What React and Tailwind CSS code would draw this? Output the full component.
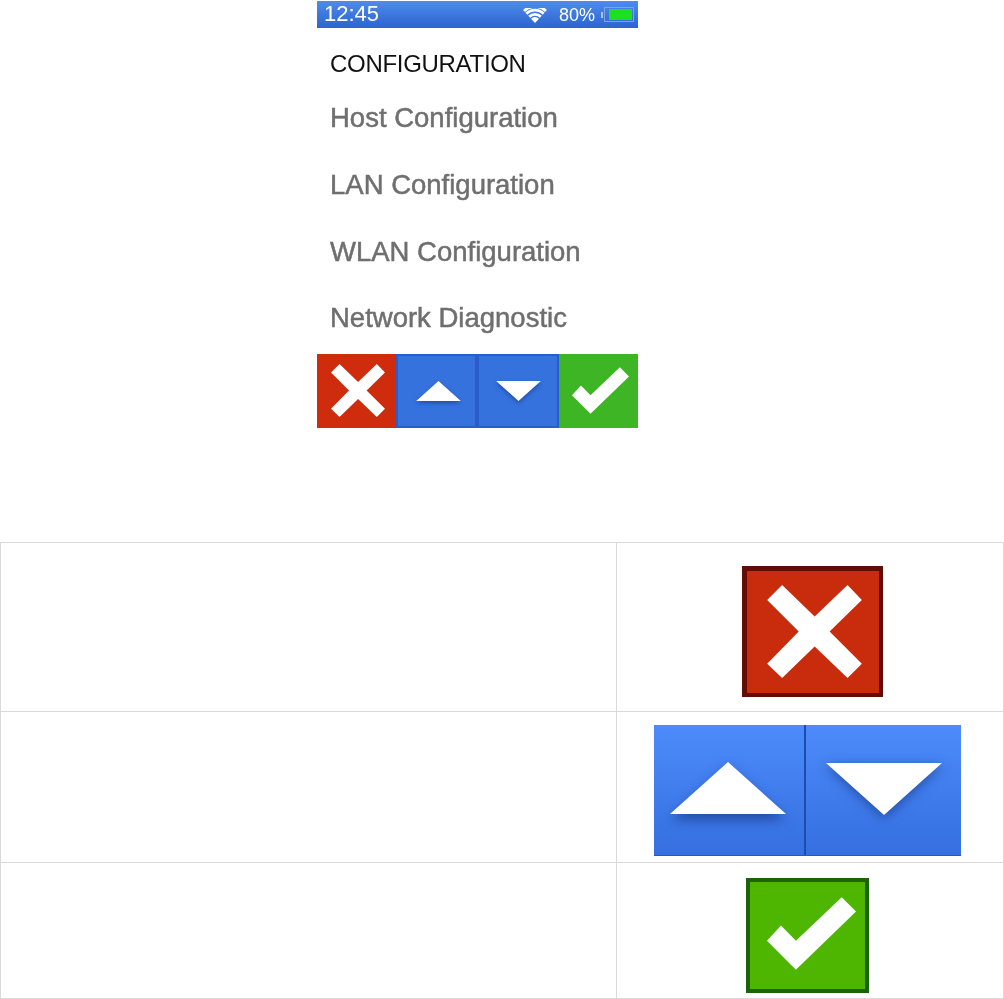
const X = ({ className }) => (
  <svg viewBox="500 150 285 280" className={className}>
    <polygon fill="#fff" points="545,150 643,245 742,150 785,195 688,290 785,387 742,430 643,335 545,430 500,387 595,290 500,195" />
  </svg>
);
const Check = ({ className }) => (
  <svg viewBox="500 112 268 218" className={className}>
    <polygon fill="#fff" points="725,112 768,155 587,330 500,243 542,197 587,243" />
  </svg>
);
const Up = ({ className }) => (
  <svg viewBox="0 0 116 52" className={className}>
    <polygon fill="#fff" points="58,0 116,52 0,52" />
  </svg>
);
const Down = ({ className }) => (
  <svg viewBox="0 0 116 52" className={className}>
    <polygon fill="#fff" points="0,0 116,0 58,52" />
  </svg>
);
const Wifi = () => (
  <svg viewBox="0 0 24 15" className="w-6 h-[15px]">
    <path d="M12 15 L8 10.8 A5.6 5.6 0 0 1 16 10.8 Z" fill="#fff" />
    <path d="M6.2 8.8 A8.2 8.2 0 0 1 17.8 8.8" fill="none" stroke="#fff" strokeWidth="2.8" />
    <path d="M3.4 5.8 A12 12 0 0 1 20.6 5.8" fill="none" stroke="#fff" strokeWidth="2.8" />
    <path d="M1 3 A15.6 15.6 0 0 1 23 3" fill="none" stroke="#fff" strokeWidth="2.8" />
  </svg>
);

const items = ["Host Configuration", "LAN Configuration", "WLAN Configuration", "Network Diagnostic"];

export default function App() {
  return (
    <div className="w-[1004px] h-[999px] bg-white font-['Liberation_Sans',Arial,sans-serif] pt-px overflow-hidden">
      <div className="ml-[317px] w-[321px]">
        <div className="h-[27px] bg-gradient-to-b from-[#4f8bec] to-[#2c64d0] flex items-center pl-[7px] pr-[4px] text-white">
          <span className="text-[22px] leading-none blur-[0.3px] mb-[2px]">12:45</span>
          <span className="ml-auto mr-[12px] blur-[0.3px] mt-px"><Wifi /></span>
          <span className="text-[18px] leading-none blur-[0.3px] mr-[6px]">80%</span>
          <span className="w-[2px] h-[6px] bg-[#a9c2f0]" />
          <span className="ml-[1px] w-[30px] h-[15px] border border-[#7ea4e8] pl-[4px] pr-px py-[1px] flex">
            <span className="flex-1 bg-[#1fe01f]" />
          </span>
        </div>
        <div className="pl-[13px] h-[57px] flex items-center pt-[14px] text-[24px] text-[#111] tracking-[-0.3px] blur-[0.3px]">CONFIGURATION</div>
        {items.map((t) => (
          <div key={t} className="h-[66.7px] pl-[13px] pb-[1px] flex items-center text-[27.5px] text-[#6f6f6f] font-normal blur-[0.4px] [-webkit-text-stroke:0.5px_#6f6f6f]">{t}</div>
        ))}
        <div className="mt-[2px] h-[74px] flex">
          <div className="w-[79px] bg-[#cf2c0e] flex items-center justify-center pl-[2px]"><X className="w-[54px] h-[53px]" /></div>
          <div className="w-[81px] bg-[#3572de] border-2 border-[#2a5ccb] flex items-center justify-center pl-[3px]"><Up className="w-[45px] h-[20px] drop-shadow-[0_2px_2px_rgba(20,50,130,0.6)]" /></div>
          <div className="w-[82px] bg-[#3572de] border-2 border-[#2a5ccb] flex items-center justify-center"><Down className="w-[45px] h-[20px] drop-shadow-[0_2px_2px_rgba(20,50,130,0.6)]" /></div>
          <div className="w-[79px] bg-[#3db524] flex items-center justify-center pl-[3px]"><Check className="w-[57px] h-[47px]" /></div>
        </div>
      </div>

      <div className="mt-[114px] w-[1004px] border border-[#d9d9d9] grid grid-cols-[616px_1fr] grid-rows-[169px_151px_135px]">
        <div className="border-r border-b border-[#d9d9d9]" />
        <div className="border-b border-[#d9d9d9] flex items-center justify-center pl-[5px] pt-[9px]">
          <div className="w-[141px] h-[131px] bg-[#c92c0d] border-[4px] border-t-[5px] border-l-[5px] border-[#620c05] flex items-center justify-center pl-[3px]">
            <X className="w-[95px] h-[93px]" />
          </div>
        </div>
        <div className="border-r border-b border-[#d9d9d9]" />
        <div className="border-b border-[#d9d9d9] flex items-center justify-center pr-[5px] pt-[8px]">
          <div className="w-[307px] h-[131px] flex bg-gradient-to-b from-[#4d8bfb] to-[#356fe0] border-b border-[#2459c0]">
            <div className="w-[152px] border-r-2 border-[#1c4cb0] flex items-center justify-center pr-[3px] pb-[4px]">
              <Up className="w-[116px] h-[52px] drop-shadow-[0_6px_6px_rgba(15,40,110,0.55)]" />
            </div>
            <div className="flex-1 flex items-center justify-center pl-[1px] pb-[3px]">
              <Down className="w-[116px] h-[52px] drop-shadow-[0_3px_6px_rgba(15,40,110,0.55)]" />
            </div>
          </div>
        </div>
        <div className="border-r border-[#d9d9d9]" />
        <div className="flex items-center justify-center pr-[5px] pt-[10px]">
          <div className="w-[123px] h-[115px] bg-[#4eb600] border-[4px] border-[#1b6208] flex items-center justify-center pl-[7px] pb-[3px]">
            <Check className="w-[89px] h-[73px]" />
          </div>
        </div>
      </div>
    </div>
  );
}
